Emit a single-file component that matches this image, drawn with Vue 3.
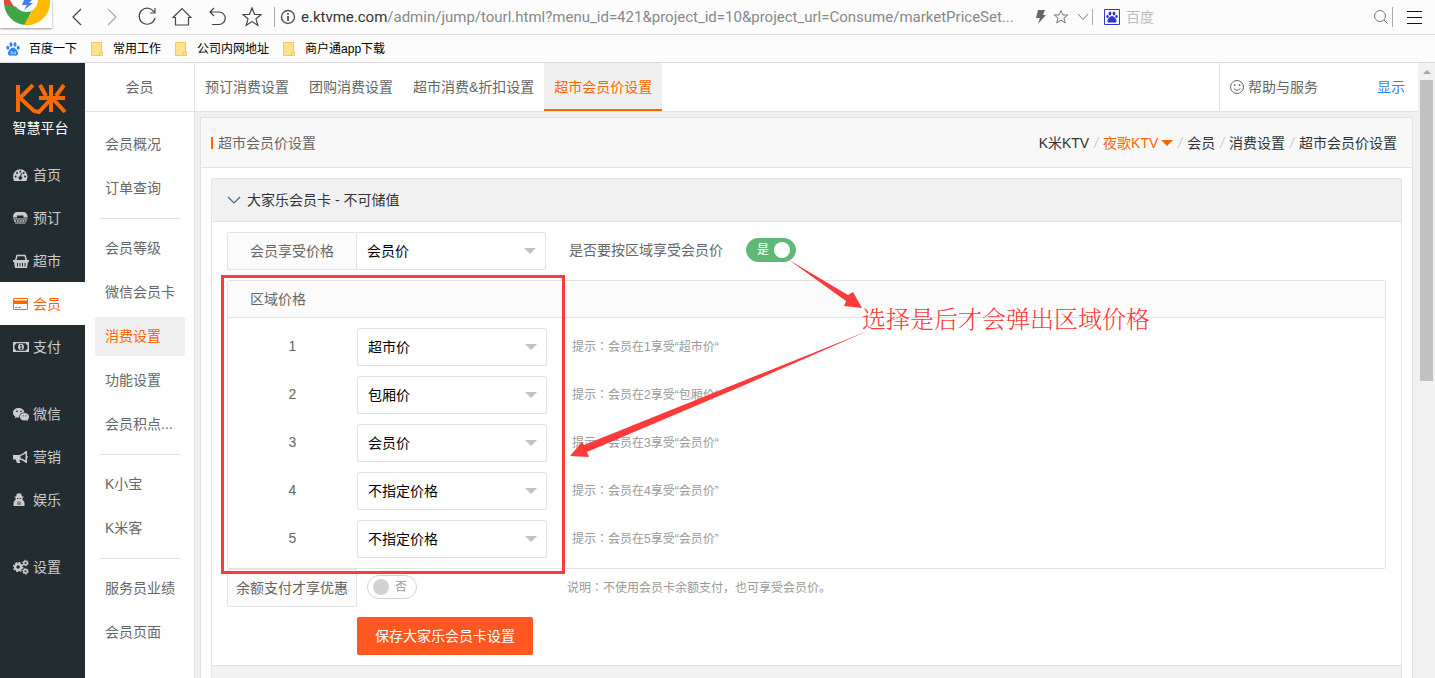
<script setup>
import { ref } from 'vue'

const bookmarks = ['常用工作', '公司内网地址', '商户通app下载']

const mainNav = [
  [
    { name: '首页', icon: 'gauge' },
    { name: '预订', icon: 'phone' },
    { name: '超市', icon: 'basket' },
    { name: '会员', icon: 'card', active: true },
    { name: '支付', icon: 'money' }
  ],
  [
    { name: '微信', icon: 'wechat' },
    { name: '营销', icon: 'horn' },
    { name: '娱乐', icon: 'fun' }
  ],
  [{ name: '设置', icon: 'gears' }]
]

const subNav = [
  ['会员概况', '订单查询'],
  ['会员等级', '微信会员卡', '消费设置', '功能设置', '会员积点...'],
  ['K小宝', 'K米客'],
  ['服务员业绩', '会员页面']
]

const tabs = ['预订消费设置', '团购消费设置', '超市消费&折扣设置', '超市会员价设置']

const priceOptions = ['不指定价格', '超市价', '包厢价', '会员价']
const memberPrice = ref('会员价')
const byArea = ref(true)
const balanceOnly = ref(false)

const areas = ref([
  { id: 1, price: '超市价', tip: '会员在1享受“超市价“' },
  { id: 2, price: '包厢价', tip: '会员在2享受“包厢价“' },
  { id: 3, price: '会员价', tip: '会员在3享受“会员价“' },
  { id: 4, price: '不指定价格', tip: '会员在4享受“会员价”' },
  { id: 5, price: '不指定价格', tip: '会员在5享受“会员价”' }
])
</script>

<template>
  <div class="window">
    <header class="toolbar">
      <div class="browser-logo">
        <svg width="52" height="28" viewBox="0 0 52 28">
          <path d="M4 3A23 23 0 0 0 25 25L33 8 20 8Z" fill="#3fa648" />
          <path d="M50 3A23 23 0 0 1 24 25L37 2V0H50Z" fill="#fdbc02" />
          <path d="M4 0H10L14 7 4 4Z" fill="#e8483c" />
          <path d="M14 0A12 12 0 0 0 27 12 12 12 0 0 0 38 0Z" fill="#fff" />
          <path d="M24 0H32L29 3H33L24 10 27 5H22Z" fill="#3d83f0" />
        </svg>
      </div>
      <nav class="browser-buttons">
        <button aria-label="后退"><svg width="20" height="20" viewBox="0 0 20 20"><path d="M14 2 6 10 14 18" /></svg></button>
        <button aria-label="前进" class="dim"><svg width="20" height="20" viewBox="0 0 20 20"><path d="M6 2 14 10 6 18" /></svg></button>
        <button aria-label="刷新"><svg width="20" height="20" viewBox="0 0 20 20"><path d="M17 5A8 8 0 1 0 18 11M18 1V6H13" /></svg></button>
        <button aria-label="主页"><svg width="20" height="20" viewBox="0 0 20 20"><path d="M1 10.500 10 1.500 19 10.500H16.500V18H3.500V10.500Z" /></svg></button>
        <button aria-label="撤销"><svg width="20" height="20" viewBox="0 0 20 20"><path d="M7 1 3 5 7 9M3 5H12A6 6 0 0 1 12 17.500H5" /></svg></button>
        <button aria-label="收藏"><svg width="20" height="20" viewBox="0 0 20 20"><path d="M10 1 12.500 7.300 19 7.500 14 11.800 15.800 18.300 10 14.600 4.200 18.300 6 11.800 1 7.500 7.500 7.300Z" /></svg></button>
      </nav>
      <div class="address">
        <svg width="16" height="16" viewBox="0 0 16 16"><circle cx="8" cy="8" r="6.500" fill="none" stroke="#555" stroke-width="1.400" /><path d="M8 4V5.700M8 7V12" stroke="#555" stroke-width="1.800" /></svg>
        <span class="url"><b>e.ktvme.com</b>/admin/jump/tourl.html?menu_id=421&amp;project_id=10&amp;project_url=Consume/marketPriceSet...</span>
      </div>
      <div class="address-tools">
        <svg width="12" height="16" viewBox="0 0 12 16"><path d="M3 1H10L8 6H11L3 15 5 9H1Z" fill="#666" /></svg>
        <svg width="16" height="16" viewBox="0 0 16 16"><path d="M8 1.500 9.900 6H14.800L10.900 9 12.300 14 8 11.100 3.700 14 5.100 9 1.200 6H6.100Z" fill="none" stroke="#777" /></svg>
        <svg width="12" height="16" viewBox="0 0 12 16"><path d="M1 5 6 10.500 11 5" fill="none" stroke="#777" /></svg>
      </div>
      <form class="search" @submit.prevent>
        <svg width="16" height="16" viewBox="0 0 16 16">
          <path d="M.5 .5H15.500V15.500H.5Z" fill="#fff" stroke="#2a35dc" />
          <g fill="#2a35dc"><ellipse cx="6" cy="4.500" rx="1.400" ry="1.900" /><ellipse cx="10" cy="4.500" rx="1.400" ry="1.900" /><ellipse cx="3.500" cy="7.500" rx="1.200" ry="1.700" /><ellipse cx="12.500" cy="7.500" rx="1.200" ry="1.700" /><path d="M8 7C10 7 13 10.500 12.500 12.500 12 14 10 13.500 8 13.500S4 14 3.500 12.500C3 10.500 6 7 8 7Z" /></g>
        </svg>
        <input type="text" placeholder="百度" aria-label="搜索" />
        <button aria-label="搜索"><svg width="16" height="16" viewBox="0 0 16 16"><circle cx="7" cy="7" r="5.500" fill="none" stroke="#777" /><path d="M11 11 14.500 14.500" stroke="#777" /></svg></button>
      </form>
      <button class="menu-button" aria-label="菜单"><svg width="16" height="14" viewBox="0 0 16 14"><path d="M0 1.500H15M0 7.500H15M0 13.500H15" stroke="#111" /></svg></button>
    </header>

    <nav class="bookmarks">
      <a href="#">
        <svg width="14" height="14" viewBox="0 0 14 14" fill="#2f80f0"><ellipse cx="5" cy="2.500" rx="1.500" ry="2.200" /><ellipse cx="9" cy="2.500" rx="1.500" ry="2.200" /><ellipse cx="1.800" cy="5.800" rx="1.500" ry="2" /><ellipse cx="12.200" cy="5.800" rx="1.500" ry="2" /><path d="M7 5.500C9 5.500 12.500 9.500 12 12 11.500 14.300 9 13.500 7 13.500S2.500 14.300 2 12C1.500 9.500 5 5.500 7 5.500Z" /><path d="M5 9V12H6.500V9.500M8 9.500V12H9.500V9.500" fill="none" stroke="#cfe2ff" stroke-width=".7" /></svg>
        百度一下
      </a>
      <a v-for="mark in bookmarks" :key="mark" href="#">
        <svg width="14" height="14" viewBox="0 0 14 14"><path d="M1.500 .5H11.500V9L12.500 10V13.500H1.500Z" fill="#ffe28c" stroke="#eec95c" /><path d="M9.500 13.500V10H11.500" fill="none" stroke="#eec95c" /></svg>
        {{ mark }}
      </a>
    </nav>

    <div class="page">
      <aside class="sidebar">
        <div class="brand">
          <svg width="54" height="30" viewBox="0 0 54 30" fill="none" stroke="#ff6a00" stroke-width="4">
            <path d="M4 1V28M19 1 6 14 20 27 25 28 36 16M36 14H51M25 14H36M26 1 32 12M50 1 42 12M37 1V28M39 15 51 28" />
          </svg>
          <span>智慧平台</span>
        </div>
        <ul v-for="(group, g) in mainNav" :key="g">
          <li v-for="item in group" :key="item.name">
            <a href="#" :class="{ active: item.active }">
              <svg width="16" height="16" viewBox="0 0 16 16" fill="currentColor">
                <template v-if="item.icon === 'gauge'">
                  <path d="M0 9.500A7.200 7.200 0 0 1 14.400 9.500Q14.400 12 13.300 14H1.100Q0 12 0 9.500Z" />
                  <g fill="#222d32"><circle cx="2.600" cy="9.500" r="1" /><circle cx="4" cy="6" r="1" /><circle cx="7.200" cy="4.500" r="1" /><circle cx="10.600" cy="6" r="1" /><circle cx="12" cy="9.500" r="1" /><path d="M8.200 5.800 9 6 8.200 9.500A1.700 1.700 0 1 1 7 9.300Z" /></g>
                </template>
                <template v-else-if="item.icon === 'phone'">
                  <path d="M0 7.500V6Q1 2 4 2H10.500Q13.500 2 14.500 6V7.500H10.500V5.500H4V7.500Z" />
                  <path d="M0 8.500H14.500V9.500H0Z" />
                  <path d="M1 11H13.500" stroke="currentColor" stroke-width="1.500" stroke-dasharray="2 .8" />
                  <path d="M2 12.500H12.500V13.500H2Z" />
                </template>
                <template v-else-if="item.icon === 'basket'">
                  <path d="M0 7H16V9H15L14 15H2L1 9H0Z" />
                  <path d="M2.500 8 4 2.500H12L13.500 8" fill="none" stroke="currentColor" stroke-width="1.500" />
                  <path d="M4.500 10V13.500M7 10V13.500M9.500 10V13.500M12 10V13.500" stroke="#222d32" />
                </template>
                <template v-else-if="item.icon === 'card'">
                  <path d="M.5 3Q.5 2.500 1 2.500H14Q14.500 2.500 14.500 3V13Q14.500 13.500 14 13.500H1Q.5 13.500 .5 13Z" fill="none" stroke="currentColor" />
                  <path d="M0 4.500H15V8H0ZM2 11H4V12H2ZM5 11H8V12H5Z" />
                </template>
                <template v-else-if="item.icon === 'money'">
                  <path d="M0 3H16V13H0ZM3 4.300Q3 6 1.500 6V10Q3 10 3 11.700H13Q13 10 14.500 10V6Q13 6 13 4.300Z" fill-rule="evenodd" />
                  <ellipse cx="8" cy="8" rx="2.900" ry="3.300" />
                  <path d="M7 7 8.200 6V10M6.800 10H9.300" fill="none" stroke="#222d32" />
                </template>
                <template v-else-if="item.icon === 'wechat'">
                  <path d="M6 2C2.500 2 0 4 0 6.700 0 8.400 1 9.700 2.300 10.500L1.800 12.300 4 11.200Q5 11.500 6.200 11.400C6 8.500 8.300 6.300 11.500 6.200 11 3.700 8.700 2 6 2Z" />
                  <path d="M11.500 7C8.700 7 6.900 8.700 6.900 10.800S8.900 14.500 11.500 14.500L13 14.300 15 15.300 14.500 13.700C15.500 13 16.200 12 16.200 10.900 16.200 8.800 14.200 7 11.500 7Z" />
                  <g fill="#222d32"><circle cx="4" cy="5.400" r=".8" /><circle cx="8" cy="5.400" r=".8" /><circle cx="10" cy="9.800" r=".6" /><circle cx="13" cy="9.800" r=".6" /></g>
                </template>
                <template v-else-if="item.icon === 'horn'">
                  <path d="M0 6H6Q10 5 13 2H14V6.500L15 8 14 9.500V14H13Q10 11 6.500 10.500 6 12 7.500 14H4L2.700 10.500H0ZM7.500 7V9.200Q10 9.700 12.500 11.500V4.500Q10 6.300 7.500 7Z" fill-rule="evenodd" />
                </template>
                <template v-else-if="item.icon === 'fun'">
                  <path d="M1.500 4.500H3L4 1.500H8L9 4.500H10.500V5.500H9.500V8Q11.500 9 11.500 11V14H.5V11Q.5 9 2.500 8V5.500H1.500Z" />
                  <path d="M4 6.500H5.500M6.500 6.500H8M5 9.500V13M7 9.500V13" stroke="#222d32" stroke-width=".9" />
                </template>
                <template v-else>
                  <g fill="none" stroke="currentColor">
                    <circle cx="5.200" cy="8" r="3" stroke-width="2.400" />
                    <circle cx="5.200" cy="8" r="4.600" stroke-width="1.400" stroke-dasharray="1.800 1.810" />
                    <circle cx="12.500" cy="4" r="1.800" stroke-width="1.500" /><circle cx="12.500" cy="4" r="2.800" stroke-dasharray="1.400 1.530" />
                    <circle cx="12.500" cy="12.300" r="1.800" stroke-width="1.500" /><circle cx="12.500" cy="12.300" r="2.800" stroke-dasharray="1.400 1.530" />
                  </g>
                </template>
              </svg>
              <span>{{ item.name }}</span>
            </a>
          </li>
        </ul>
      </aside>

      <aside class="subnav">
        <h2>会员</h2>
        <div class="subnav-body">
          <ul v-for="(group, g) in subNav" :key="g">
            <li v-for="name in group" :key="name">
              <a href="#" :class="{ active: name === '消费设置' }">{{ name }}</a>
            </li>
          </ul>
        </div>
      </aside>

      <div class="main">
        <div class="topbar">
          <nav class="tabs">
            <a v-for="(tab, i) in tabs" :key="tab" href="#" :class="{ active: i === 3 }">{{ tab }}</a>
          </nav>
          <div class="help">
            <a href="#">
              <svg width="16" height="16" viewBox="0 0 16 16"><g fill="none" stroke="#666"><circle cx="8" cy="8" r="6.500" /><path d="M4.800 9.500Q8 13 11.200 9.500" /></g><circle cx="5.600" cy="6.200" r=".9" fill="#666" /><circle cx="10.400" cy="6.200" r=".9" fill="#666" /></svg>
              帮助与服务
            </a>
            <a href="#" class="show">显示</a>
          </div>
        </div>

        <section class="panel">
          <div class="panel-head">
            <h1>超市会员价设置</h1>
            <nav class="crumbs">
              <a href="#">K米KTV</a><i>/</i>
              <a href="#" class="current">夜歌KTV<span class="caret"></span></a><i>/</i>
              <a href="#">会员</a><i>/</i>
              <a href="#">消费设置</a><i>/</i>
              <a href="#">超市会员价设置</a>
            </nav>
          </div>

          <div class="panel-body">
            <div class="card">
              <button class="card-head">
                <svg width="14" height="14" viewBox="0 0 14 14"><path d="M1 4 7 10 13 4" fill="none" stroke="#46637f" stroke-width="1.200" /></svg>
                大家乐会员卡 - 不可储值
              </button>
              <form class="card-body" @submit.prevent>
                <div class="row">
                  <label class="label-box" for="member-price">会员享受价格</label>
                  <span class="picker">
                    <select id="member-price" v-model="memberPrice">
                      <option v-for="o in priceOptions" :key="o">{{ o }}</option>
                    </select>
                  </span>
                  <label class="question" for="by-area">是否要按区域享受会员价</label>
                  <label class="switch" :class="{ on: byArea }">
                    <input id="by-area" v-model="byArea" type="checkbox" />
                    <em>{{ byArea ? '是' : '否' }}</em><s></s>
                  </label>
                </div>

                <fieldset v-if="byArea" class="areas">
                  <div class="areas-title">区域价格</div>
                  <div class="areas-list">
                    <div v-for="area in areas" :key="area.id" class="area">
                      <label :for="'area-' + area.id">{{ area.id }}</label>
                      <span class="picker">
                        <select :id="'area-' + area.id" v-model="area.price">
                          <option v-for="o in priceOptions" :key="o">{{ o }}</option>
                        </select>
                      </span>
                      <small>提示<span class="colon">：</span>{{ area.tip }}</small>
                    </div>
                  </div>
                </fieldset>

                <div class="row balance">
                  <label class="label-box" for="balance-only">余额支付才享优惠</label>
                  <label class="switch" :class="{ on: balanceOnly }">
                    <input id="balance-only" v-model="balanceOnly" type="checkbox" />
                    <em>{{ balanceOnly ? '是' : '否' }}</em><s></s>
                  </label>
                  <small>说明<span class="colon">：</span>不使用会员卡余额支付，也可享受会员价。</small>
                </div>

                <button class="save">保存大家乐会员卡设置</button>
              </form>
              <div class="card-head next"></div>
            </div>
          </div>
        </section>
      </div>

      <div class="scrollbar"><i></i><b></b></div>
    </div>

    <svg class="marks" width="1160" height="580" viewBox="0 0 1160 580">
      <rect x="222.500" y="276.500" width="341" height="296" fill="none" stroke="#fc3a39" stroke-width="3" />
      <path d="M789 260 848 295 853 292 862 308 844 306 846 301Z" fill="#fc3a39" />
      <path d="M870 330 584 445 582 442 570 456 589 457 587 452 740 387Z" fill="#fc3a39" />
    </svg>
    <p class="note">选择是后才会弹出区域价格</p>
  </div>
</template>

<style>
body {
  overflow: hidden;
}
</style>

<style scoped>
* {
  box-sizing: border-box;
}
.window {
  position: relative;
  display: flex;
  flex-direction: column;
  height: 100vh;
  overflow: hidden;
  font: 14px/20px "Liberation Sans", "Noto Sans CJK SC", sans-serif;
  color: #666;
  background: #fff;
}
a {
  color: inherit;
  text-decoration: none;
}
ul {
  list-style: none;
  margin: 0;
  padding: 0;
}
button {
  font: inherit;
  border: 0;
  background: none;
  padding: 0;
}
svg {
  display: block;
  flex: none;
}

.toolbar {
  flex: none;
  display: flex;
  align-items: center;
  height: 35px;
  padding-right: 12px;
  background: #fcfcfc;
  border-bottom: 1px solid #d9d9d9;
}
.browser-logo {
  align-self: flex-start;
  width: 52px;
  height: 28px;
  background: #fff;
  box-shadow: 0 1px 2px #999;
}
.browser-buttons {
  display: flex;
  gap: 15px;
  margin-left: 15px;
  padding-right: 12px;
  border-right: 1px solid #aaa;
}
.browser-buttons svg {
  fill: none;
  stroke: #444;
  stroke-width: 1.2;
}
.browser-buttons .dim svg {
  stroke: #aaa;
}
.address {
  flex: 1;
  min-width: 0;
  display: flex;
  align-items: center;
  gap: 5px;
  padding-left: 5px;
}
.url {
  white-space: nowrap;
  font-family: Roboto, sans-serif;
  font-size: 15px;
  color: #888;
}
.url b {
  font-weight: 400;
  color: #333;
}
.address-tools {
  display: flex;
  gap: 6px;
  padding-right: 3px;
  margin-left: 10px;
  border-right: 1px solid #aaa;
}
.address-tools svg:last-child {
  margin-left: 2px;
}
.search {
  display: flex;
  align-items: center;
  width: 300px;
  padding: 0 3px 0 11px;
  border-right: 1px solid #aaa;
}
.search input {
  flex: 1;
  min-width: 0;
  border: 0;
  background: none;
  outline: none;
  font: inherit;
  padding: 0 6px;
}
.search input::placeholder {
  color: #bbb;
}
.menu-button {
  margin-left: 14px;
}

.bookmarks {
  flex: none;
  display: flex;
  gap: 13px;
  align-items: center;
  height: 28px;
  padding-left: 6px;
  background: #fcfcfc;
  border-bottom: 1px solid #d9d9d9;
  font-size: 12px;
  color: #000;
}
.bookmarks a {
  display: flex;
  align-items: center;
  gap: 9px;
}

.page {
  flex: 1;
  min-height: 0;
  display: flex;
}
.sidebar {
  flex: none;
  width: 85px;
  background: #222d32;
  color: #ccc;
}
.brand {
  height: 90px;
  display: flex;
  flex-direction: column;
  align-items: center;
  padding: 21px 4px 0 0;
  gap: 4px;
  color: #fff;
}
.brand span {
  font-size: 14px;
}
.sidebar ul {
  margin-bottom: 24px;
}
.sidebar a {
  display: flex;
  align-items: center;
  gap: 4px;
  height: 43px;
  padding-left: 13px;
}
.sidebar a.active {
  background: #fff;
  color: #ff6600;
}

.subnav {
  flex: none;
  width: 110px;
  border-right: 1px solid #e2e2e2;
}
.subnav h2 {
  margin: 0;
  height: 49px;
  font-size: 14px;
  font-weight: 400;
  line-height: 48px;
  text-align: center;
  border-bottom: 1px solid #e2e2e2;
}
.subnav-body {
  padding: 13px 9px 0 10px;
}
.subnav li + li {
  margin-top: 5px;
}
.subnav ul + ul::before {
  content: "";
  display: block;
  height: 1px;
  margin: 10px 5px;
  background: #e2e2e2;
}
.subnav a {
  display: block;
  padding-left: 10px;
  line-height: 39px;
  border-radius: 2px;
  white-space: nowrap;
}
.subnav a.active {
  background: #efefef;
  color: #ff6600;
}

.main {
  flex: 1;
  min-width: 0;
  background: #f0f0f0;
}
.topbar {
  display: flex;
  justify-content: space-between;
  height: 49px;
  background: #fff;
  border-bottom: 1px solid #e2e2e2;
}
.tabs {
  display: flex;
}
.tabs a {
  padding: 0 10px;
  line-height: 48px;
}
.tabs a.active {
  background: #efefef;
  color: #ff6600;
  border-bottom: 2px solid #ff6600;
}
.help {
  display: flex;
  align-items: center;
  justify-content: space-between;
  width: 199px;
  padding: 0 13px 0 9px;
  border-left: 1px solid #e2e2e2;
}
.help a {
  display: flex;
  align-items: center;
  gap: 3px;
}
.help .show {
  color: #3385ff;
}

.panel {
  margin: 5px 5px 0;
  border: 1px solid #e2e2e2;
  background: #fff;
}
.panel-head {
  display: flex;
  align-items: center;
  justify-content: space-between;
  height: 50px;
  padding: 0 15px 0 10px;
  background: #f8f8f8;
  border-bottom: 1px solid #e2e2e2;
}
.panel-head h1 {
  margin: 0;
  padding-left: 5px;
  font-size: 14px;
  line-height: 12px;
  font-weight: 400;
  border-left: 2px solid #ff6600;
}
.crumbs {
  display: flex;
  color: #333;
}
.crumbs i {
  margin: 0 5px;
  color: #ccc;
}
.crumbs .current {
  display: flex;
  align-items: center;
  color: #ff6600;
}
.caret {
  margin-left: 3px;
  border: 6px solid transparent;
  border-top-color: #ff6600;
  border-bottom: 0;
}
.panel-body {
  padding: 10px;
}
.card {
  border: 1px solid #e2e2e2;
  border-radius: 2px;
}
.card-head {
  display: flex;
  align-items: center;
  gap: 6px;
  width: 100%;
  height: 43px;
  padding-left: 15px;
  background: #f1f1f1;
  border-bottom: 1px solid #e2e2e2;
  color: #333;
}
.card-head.next {
  border-top: 1px solid #e2e2e2;
}
.card-body {
  padding: 10px 15px;
}
.row {
  display: flex;
}
.label-box {
  width: 130px;
  height: 38px;
  line-height: 36px;
  text-align: center;
  background: #fbfbfb;
  border: 1px solid #e2e2e2;
  border-radius: 2px 0 0 2px;
}
.picker {
  position: relative;
  width: 190px;
  height: 38px;
}
.row .picker {
  margin-left: -1px;
}
.picker::after {
  content: "";
  position: absolute;
  right: 10px;
  top: 16px;
  border: 6px solid transparent;
  border-top-color: #c2c2c2;
  border-bottom: 0;
  pointer-events: none;
}
.picker select {
  appearance: none;
  width: 100%;
  height: 100%;
  padding: 0 10px;
  font: inherit;
  color: #000;
  background: #fff;
  border: 1px solid #e2e2e2;
  border-radius: 2px;
}
.question {
  margin: 8px 23px 0;
}
.switch {
  display: flex;
  flex-direction: row-reverse;
  align-items: center;
  justify-content: space-between;
  width: 50px;
  height: 24px;
  margin-top: 6px;
  padding: 0 9px 0 5px;
  border: 1px solid #d2d2d2;
  border-radius: 12px;
  font-size: 12px;
  color: #999;
}
.switch input {
  position: absolute;
  opacity: 0;
  margin: 0;
}
.switch em {
  font-style: normal;
}
.switch s {
  width: 16px;
  height: 16px;
  border-radius: 50%;
  background: #d2d2d2;
}
.switch.on {
  flex-direction: row;
  padding: 0 5px 0 10px;
  color: #fff;
  background: #5fb878;
  border-color: #5fb878;
}
.switch.on s {
  background: #fff;
}
.areas {
  margin: 10px 0 0;
  padding: 0;
  min-width: 0;
  border: 1px solid #e2e2e2;
  border-radius: 2px;
}
.areas-title {
  height: 37px;
  padding-left: 22px;
  line-height: 36px;
  background: #fbfbfb;
  border-bottom: 1px solid #e2e2e2;
}
.areas-list {
  display: flex;
  flex-direction: column;
  gap: 10px;
  padding: 10px 0;
}
.area {
  display: flex;
}
.area label {
  width: 129px;
  line-height: 36px;
  text-align: center;
}
small {
  font-size: 12px;
  line-height: 38px;
  color: #999;
}
.colon {
  font-family: "Noto Sans CJK TC", sans-serif;
  line-height: 12px;
}
.area small {
  margin-left: 25px;
}
.balance .switch {
  margin-left: 10px;
}
.balance small {
  margin-left: 150px;
}
.save {
  display: block;
  width: 176px;
  height: 38px;
  margin: 10px 0 0 130px;
  color: #fff;
  background: #ff5722;
  border-radius: 2px;
}

.scrollbar {
  flex: none;
  width: 17px;
  padding: 7px 2px;
  background: #f1f1f1;
}
.scrollbar i {
  display: block;
  width: 8px;
  margin: 0 auto 6px;
  border: 4px solid transparent;
  border-bottom-color: #a3a3a3;
  border-top: 0;
}
.scrollbar b {
  display: block;
  height: 50%;
  background: #c1c1c1;
}

.marks {
  position: absolute;
  left: 0;
  top: 0;
  pointer-events: none;
}
.note {
  position: absolute;
  left: 862px;
  top: 304px;
  margin: 0;
  font-family: "Liberation Serif", "Noto Serif CJK SC", "Noto Sans CJK SC", serif;
  font-size: 24px;
  font-weight: 300;
  line-height: 32px;
  white-space: nowrap;
  color: #fc3a39;
}
</style>
